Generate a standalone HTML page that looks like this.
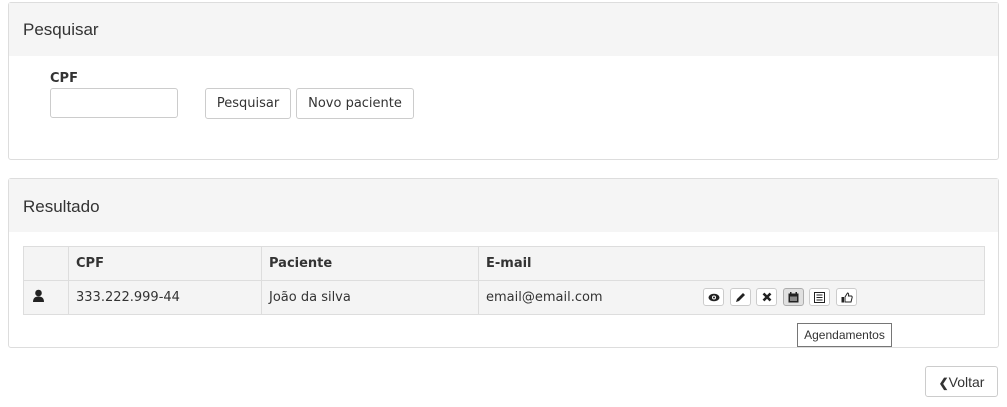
<!DOCTYPE html><html><head><style>
body{margin:0;background:#fff;font-family:"DejaVu Sans",Verdana,sans-serif;font-size:13px;color:#333;width:1007px;height:407px;position:relative;overflow:hidden}
.a{position:absolute;box-sizing:border-box}
.panel{border:1px solid #ddd;border-radius:3px;background:#fff}
.ph{background:#f5f5f5;font-family:"Liberation Sans",sans-serif;font-size:17px;color:#333;padding-left:14px}
.btn{border:1px solid #ccc;border-radius:3px;background:#fff;text-align:center}
td{box-sizing:border-box;border-right:1px solid #ddd;padding:0 0 0 7px;height:34px}
table{border-collapse:collapse}
.ib{position:absolute;top:288px;width:21px;height:18px;border:1px solid #ccc;border-radius:3px;background:#fff;box-sizing:border-box;display:flex;align-items:center;justify-content:center}
</style></head><body>
<div class="a panel" style="left:8px;top:2px;width:991px;height:158px"></div>
<div class="a ph" style="left:9px;top:3px;width:989px;height:53px;line-height:54px">Pesquisar</div>
<div class="a" style="left:50px;top:71px;font-weight:bold;font-size:13px">CPF</div>
<div class="a" style="left:50px;top:88px;width:128px;height:30px;border:1px solid #ccc;border-radius:3px"></div>
<div class="a btn" style="left:205px;top:88px;width:86px;height:31px;line-height:29px">Pesquisar</div>
<div class="a btn" style="left:296px;top:88px;width:118px;height:31px;line-height:29px">Novo paciente</div>

<div class="a panel" style="left:8px;top:178px;width:991px;height:170px"></div>
<div class="a ph" style="left:9px;top:179px;width:989px;height:53px;line-height:56px">Resultado</div>
<table class="a" style="left:23px;top:246px;width:962px;background:#f4f4f4;border:1px solid #ddd">
<tr style="border-bottom:1px solid #ddd;font-weight:bold"><td style="width:45px;height:33px"></td><td style="width:193px">CPF</td><td style="width:217px">Paciente</td><td style="border-right:none">E-mail</td></tr>
<tr><td style="padding-left:8px"><svg width="13" height="14" viewBox="0 0 13 14"><circle cx="6.5" cy="4" r="3.3" fill="#222"/><path d="M1 13 Q1 7.5 6.5 7.5 Q12 7.5 12 13Z" fill="#222"/></svg></td><td>333.222.999-44</td><td>João da silva</td><td style="border-right:none">email@email.com</td></tr>
</table>
<div class="ib" style="left:703px"><svg width="12" height="9"><ellipse cx="6" cy="4.5" rx="5.5" ry="3.8" fill="#222"/><circle cx="6" cy="4.5" r="2" fill="#fff"/><circle cx="6" cy="4.5" r="1" fill="#222"/></svg></div>
<div class="ib" style="left:730px"><svg width="11" height="11"><path d="M1 10 L2 7 L8 1 L10 3 L4 9Z" fill="#222"/></svg></div>
<div class="ib" style="left:756px"><svg width="10" height="10"><path d="M1.5 1.5L8.5 8.5M8.5 1.5L1.5 8.5" stroke="#222" stroke-width="2.6"/></svg></div>
<div class="ib" style="left:783px;background:#e0e0e0;border-color:#adadad"><svg width="11" height="11"><rect x="0.5" y="1.5" width="10" height="9" fill="#222"/><rect x="2" y="4.5" width="7" height="4.5" fill="#888"/><rect x="2" y="0" width="1.5" height="2" fill="#222"/><rect x="7.5" y="0" width="1.5" height="2" fill="#222"/></svg></div>
<div class="ib" style="left:809px"><svg width="11" height="11"><rect x="0.5" y="0.5" width="10" height="10" fill="none" stroke="#222"/><path d="M2.5 3h6M2.5 5.5h6M2.5 8h6" stroke="#222"/></svg></div>
<div class="ib" style="left:836px"><svg width="12" height="11"><rect x="0.5" y="5" width="2.5" height="5.5" fill="#222"/><path d="M4 5 L6.5 1 Q8 1 7.5 4 L10.5 4 Q11.5 4.5 11 6 L10 10 L4 10Z" fill="none" stroke="#222"/></svg></div>
<div class="a" style="left:797px;top:323px;width:95px;height:24px;border:1px solid #767676;background:#fff;font-family:'Liberation Sans',sans-serif;font-size:12px;line-height:22px;text-align:center">Agendamentos</div>
<div class="a btn" style="left:925px;top:366px;width:73px;height:31px;line-height:30px;font-family:'Liberation Sans',sans-serif;font-size:14px"><b style="font-size:12px">&#10094;</b>Voltar</div>
</body></html>
